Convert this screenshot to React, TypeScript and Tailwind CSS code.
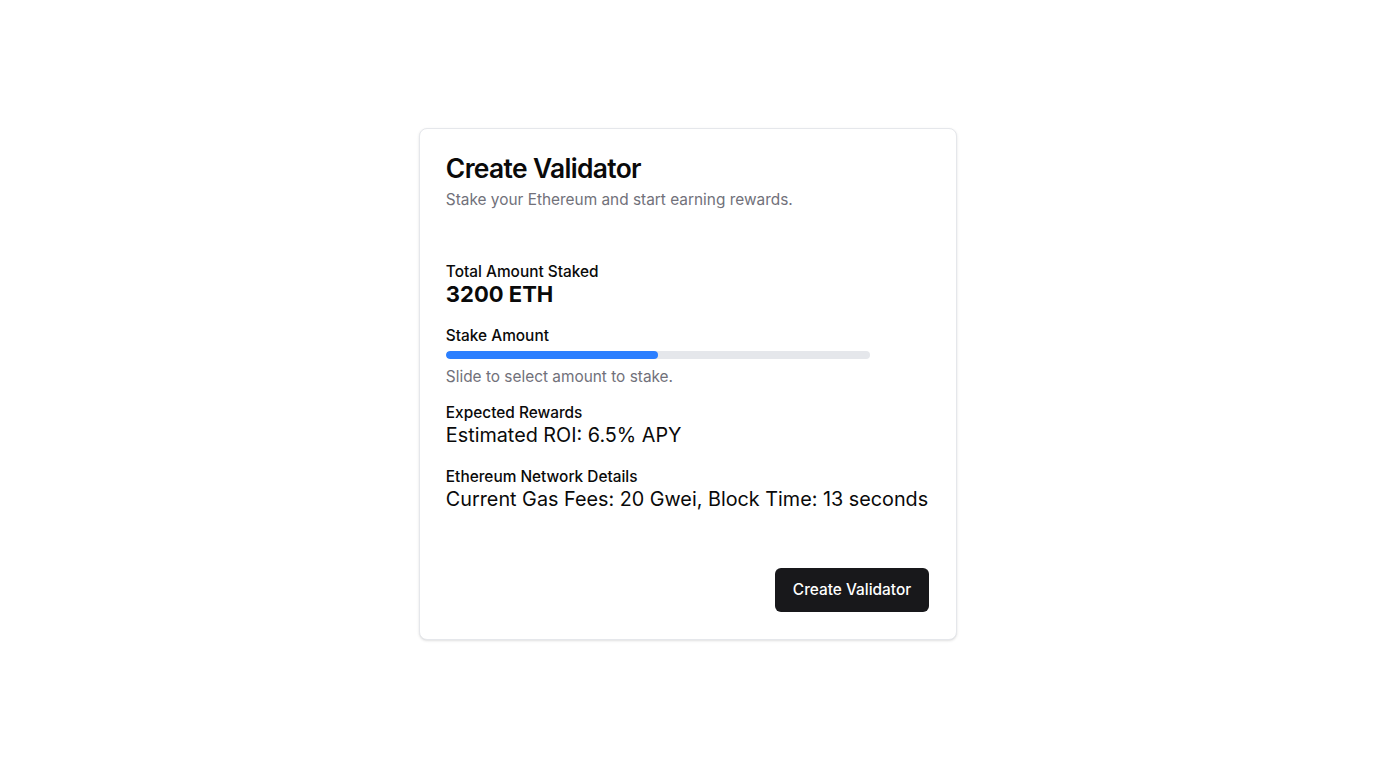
import React from "react";

export default function App() {
  return (
    <div className="min-h-screen w-full flex items-center justify-center bg-white" style={{ fontFamily: "Inter, 'Noto Sans', sans-serif" }}>
      <div className="w-fit rounded-lg border border-gray-200 bg-white shadow-sm text-[#0a0a0a]">
        <div className="pl-[26px] pr-[28px] pt-[23px]">
          <h2 className="text-[26.4px] leading-8 font-semibold tracking-tight">Create Validator</h2>
          <p className="mt-1 text-[15.4px] leading-6 text-[#71717a]">Stake your Ethereum and start earning rewards.</p>
        </div>
        <div className="pl-[26px] pr-[28px] pt-[49px] flex flex-col">
          <div>
            <div className="text-[15.4px] leading-[22px] font-medium">Total Amount Staked</div>
            <div className="text-[22px] leading-[22px] font-bold">3200 ETH</div>
          </div>
          <div className="mt-[20px]">
            <div className="text-[15.4px] leading-[22px] font-medium">Stake Amount</div>
            <div className="mt-1 h-2 w-[424px] rounded-full bg-gray-200 overflow-hidden">
              <div className="h-full rounded-full bg-blue-500" style={{ width: "50%" }} />
            </div>
            <div className="mt-2 text-[15.4px] leading-5 text-[#71717a]">Slide to select amount to stake.</div>
          </div>
          <div className="mt-4">
            <div className="text-[15.4px] leading-5 font-medium">Expected Rewards</div>
            <div className="text-[19.8px] leading-[24px]">Estimated ROI: 6.5% APY</div>
          </div>
          <div className="mt-[18px]">
            <div className="text-[15.4px] leading-6 font-medium">Ethereum Network Details</div>
            <div className="text-[19.8px] leading-[20px]">Current Gas Fees: 20 Gwei, Block Time: 13 seconds</div>
          </div>
        </div>
        <div className="pl-[26px] pr-[27px] pt-[59px] pb-[27px] flex justify-end">
          <button className="h-11 px-[18px] rounded-md bg-[#18181b] text-white text-[15.4px] font-medium">Create Validator</button>
        </div>
      </div>
    </div>
  );
}
